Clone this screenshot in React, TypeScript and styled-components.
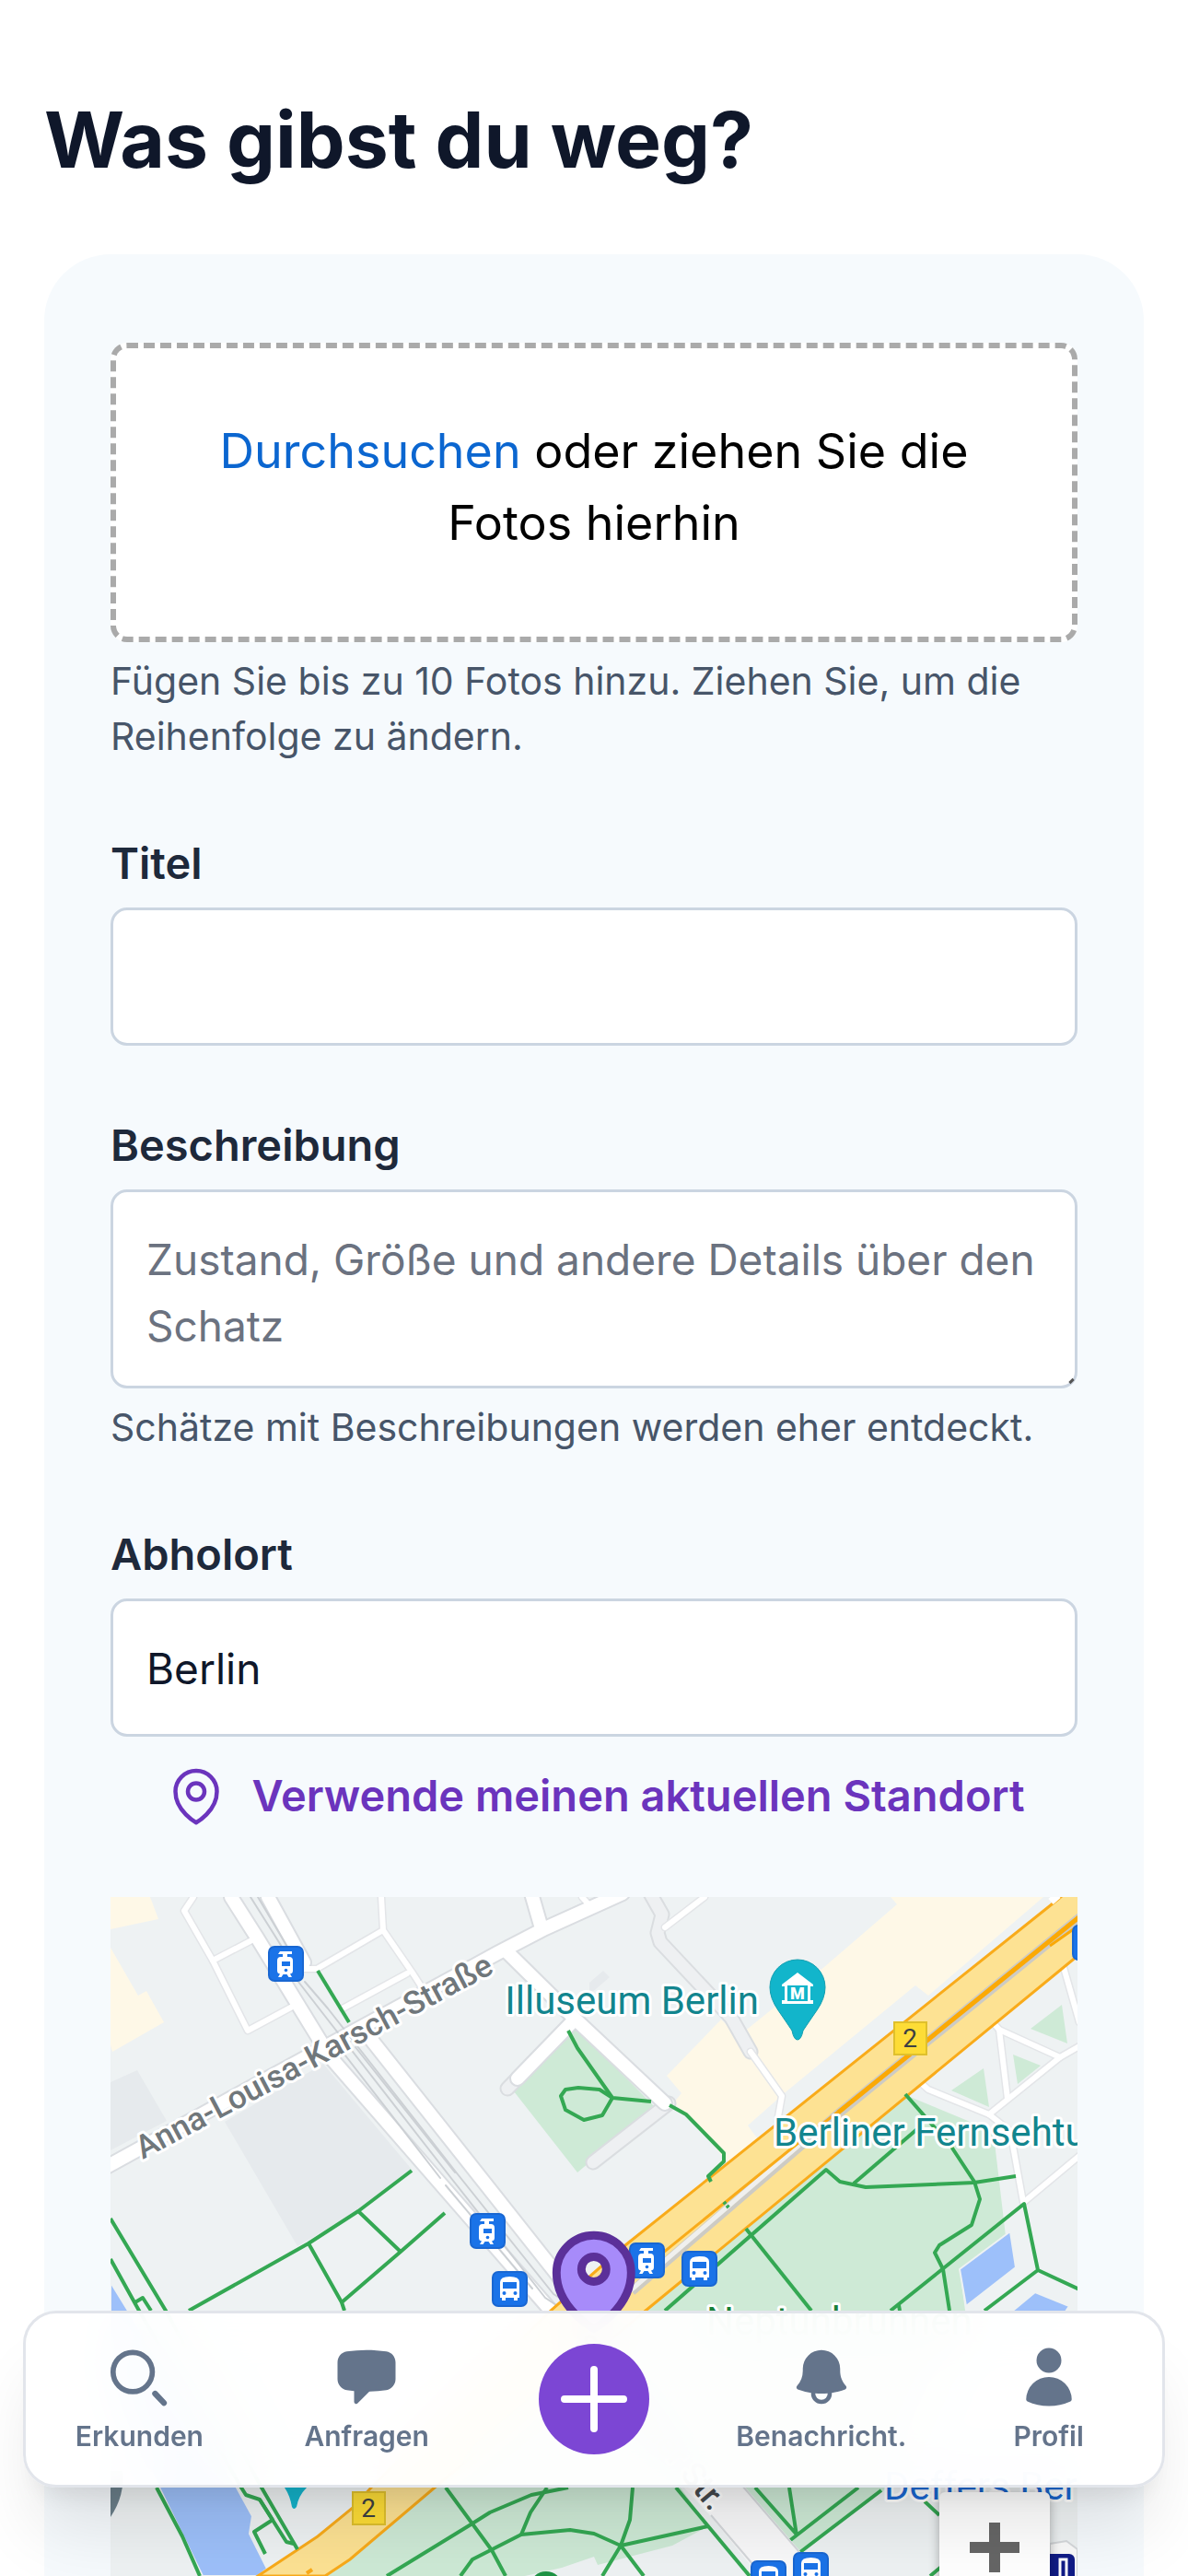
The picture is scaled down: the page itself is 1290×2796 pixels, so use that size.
import React from "react";
import styled, { createGlobalStyle, css } from "styled-components";
import { HiBell, HiChatBubbleLeft, HiOutlineMapPin, HiUser } from "react-icons/hi2";

const GlobalStyle = createGlobalStyle`
  *, *::before, *::after { box-sizing: border-box; }
  body { margin: 0; background: #fff; }
  button, input, textarea { font: inherit; }
`;

const fontStack = `Inter, "Liberation Sans", sans-serif`;

const Screen = styled.div`
  height: 100vh;
  overflow-y: auto;
  scrollbar-width: none;
  padding: 96px 48px 0;
  background: #fff;
  color: #0f172a;
  font-family: ${fontStack};
  font-size: 46px;
  line-height: 72px;
`;

const Title = styled.h1`
  margin: 0 0 68px;
  font-size: 84px;
  line-height: 112px;
  font-weight: 700;
`;

const Card = styled.form`
  display: flex;
  flex-direction: column;
  gap: 72px;
  padding: 96px 72px;
  border-radius: 72px;
  background: #f6fafd;
`;

const Field = styled.div`
  display: flex;
  flex-direction: column;
  gap: 12px;
`;

const Label = styled.label`
  color: #1e293b;
  font-size: 47px;
  font-weight: 600;
`;

const Help = styled.p`
  margin: 0;
  color: #475569;
  font-size: 41px;
  line-height: 60px;
`;

const DropZone = styled.div`
  display: flex;
  align-items: center;
  justify-content: center;
  height: 325px;
  padding: 0 96px 12px;
  border: 6px dashed #aaa;
  border-radius: 18px;
  background: #fff;
  color: #000;
  font-size: 52px;
  line-height: 78px;
  text-align: center;
`;

const Browse = styled.button`
  padding: 0;
  border: 0;
  background: none;
  color: #0b66d0;
  cursor: pointer;
`;

const control = css`
  width: 100%;
  border: 3px solid #cbd5e1;
  border-radius: 18px;
  background: #fff;
  color: #0f172a;
  outline: none;
`;

const TextInput = styled.input`
  ${control}
  height: 150px;
  padding: 2px 36px 0;
`;

const AreaFrame = styled.div`
  position: relative;
  display: flex;
`;

const TextArea = styled.textarea`
  ${control}
  height: 216px;
  padding: 37px 36px 29px;
  resize: none;
  overflow: hidden;
  &::placeholder { color: #6b7280; opacity: 1; }
`;

const Grip = styled.span`
  position: absolute;
  right: 5px;
  bottom: 5px;
  width: 3px;
  height: 6px;
  background: #555;
  transform: rotate(45deg);
`;

const LocateButton = styled.button`
  display: flex;
  align-items: center;
  justify-content: center;
  gap: 24px;
  padding: 0;
  margin: 16px 0 2px;
  border: 0;
  background: none;
  color: #6b34bd;
  font-size: 47px;
  font-weight: 600;
  cursor: pointer;
  svg { width: 72px; height: 72px; }
`;

const MapFrame = styled.div`
  position: relative;
  height: 960px;
  overflow: hidden;
  background: #eef2f3;
`;

const MapDrawing = styled.svg`
  display: block;
  width: 100%;
  height: 100%;
  font-family: Roboto, sans-serif;
`;

const HaloLabels = styled.g`
  stroke: #fff;
  stroke-width: 6px;
  stroke-linejoin: round;
  paint-order: stroke;
`;

const ZoomControls = styled.div`
  position: absolute;
  right: 30px;
  bottom: 74px;
  display: flex;
  flex-direction: column;
  border-radius: 6px;
  background: #fff;
  box-shadow: 0 3px 12px rgba(0, 0, 0, 0.3);
`;

const ZoomButton = styled.button`
  display: grid;
  place-items: center;
  width: 120px;
  height: 120px;
  padding: 0;
  border: 0;
  background: none;
  cursor: pointer;
`;

const NavBar = styled.nav`
  position: fixed;
  left: 25px;
  right: 25px;
  bottom: 96px;
  display: grid;
  grid-template-columns: repeat(5, 1fr);
  align-items: center;
  height: 192px;
  border: 3px solid #e2e5eb;
  border-radius: 36px;
  background: rgba(255, 255, 255, 0.95);
  backdrop-filter: blur(24px);
  box-shadow: 0 60px 75px -15px rgba(0, 0, 0, 0.1), 0 24px 30px -18px rgba(0, 0, 0, 0.1);
  font-family: ${fontStack};
`;

const NavLink = styled.a`
  display: flex;
  flex-direction: column;
  align-items: center;
  gap: 8px;
  color: #64748b;
  font-size: 30px;
  line-height: 40px;
  font-weight: 600;
  text-decoration: none;
  svg { width: 72px; height: 72px; }
`;

const AddButton = styled.button`
  display: grid;
  place-items: center;
  justify-self: center;
  width: 120px;
  height: 120px;
  padding: 0;
  border: 0;
  border-radius: 50%;
  background: #7c46d4;
  cursor: pointer;
`;

const Tile = ({ x, y }: { x: number; y: number }) => (
  <rect x={x + 1} y={y + 1} width="37" height="37" rx="6" fill="#1a73e8" stroke="#1967d2" strokeWidth="2" />
);

const Tram = ({ x, y }: { x: number; y: number }) => (
  <g>
    <Tile x={x} y={y} />
    <g transform={`translate(${x} ${y})`}>
      <path d="M13 6h13v3h-5v3h2q4 0 4 4v11q0 3-3 3.500l2 3.500h-3.500l-2-3h-4l-2 3h-3.500l2-3.500q-3-.5-3-3.500v-11q0-4 4-4h2v-3h-5z" fill="#fff" />
      <path d="M15 17h9v5h-9z" fill="#1a73e8" />
      <circle cx="19.500" cy="26.500" r="1.800" fill="#1a73e8" />
    </g>
  </g>
);

const Bus = ({ x, y }: { x: number; y: number }) => (
  <g>
    <Tile x={x} y={y} />
    <g transform={`translate(${x} ${y})`}>
      <path d="M9 12q0-6 10.500-6t10.500 6v17h-2v3h-4v-3h-9v3h-4v-3h-2z" fill="#fff" />
      <path d="M12 12h15v7h-15z" fill="#1a73e8" />
      <circle cx="13.500" cy="24" r="2" fill="#1a73e8" />
      <circle cx="25.500" cy="24" r="2" fill="#1a73e8" />
    </g>
  </g>
);

const Shield = ({ x, y }: { x: number; y: number }) => (
  <g>
    <rect x={x + 1} y={y + 1} width="35" height="35" fill="#fddc36" stroke="#dfc02c" strokeWidth="2" />
    <text x={x + 18} y={y + 28} fontSize="28" textAnchor="middle" fill="#3c4043">2</text>
  </g>
);

const parks = [
  "M623 2200L558 2270 627 2358 711 2287 640 2215z",
  "M986 2275L1051 2302 1079 2317 1092 2427 1042 2463 1048 2508 960 2703 869 2772 806 2700 739 2700 769 2742 730 2763 649 2784 645 2775 610 2787 570 2796 533 2796 353 2796 380 2778 472 2700 701 2508z",
  "M1119 2202L1153 2176 1159 2218z",
  "M1100 2230L1130 2242 1105 2262z",
  "M1033 2269L1068 2245 1074 2287z",
];

const water = [
  "M120 2477L139 2508 257 2700 274 2731 271 2750 290 2788 280 2796 220 2796 173 2700 120 2590z",
  "M1042 2463L1097 2422 1103 2461 1049 2503z",
  "M1124 2488L1161 2503 1155 2512 1095 2512z",
];

const lanes = [
  "M210 2059L200 2074 231 2128 269 2204 323 2175",
  "M231 2128L279 2103",
  "M414 2059L416 2095 449 2143 458 2157",
  "M330 2137L344 2137 416 2095",
  "M372 2180L442 2142",
  "M722 2092L765 2059",
  "M632 2059L640 2068",
  "M815 2227L849 2275 844 2303",
  "M1154 2132L1172 2195",
  "M1078 2195L1085 2203 1151 2233 1172 2221",
  "M1085 2203L1094 2278",
  "M1151 2233L1074 2295",
  "M999 2260L1008 2268 1074 2295 1097 2313 1111 2390",
  "M1112 2390L1172 2340",
];

const streets = [
  "M251 2059L279 2103 323 2175 358 2232 600 2510",
  "M291 2059L330 2130",
  "M404 2215L606 2470 630 2510",
  "M112 2354L250 2278 540 2120 592 2093 676 2055",
  "M577 2055L588 2093",
  "M552 2120L623 2190 722 2283",
  "M623 2193L562 2256",
];

const rails = [
  "M272 2059L306 2113M324 2151L348 2182 489 2363 592 2494 610 2506",
  "M280 2059L312 2113M331 2151L356 2180 497 2360 601 2490 620 2502",
  "M368 2222L478 2364M386 2222L494 2358M484 2372L578 2484",
];

const trails = [
  "M345 2139L379 2195",
  "M120 2408L180 2508 284 2700 323 2767",
  "M120 2452L151 2508 262 2700 267 2708 282 2713 296 2735 276 2748 288 2772",
  "M145 2500L155 2494 164 2508",
  "M282 2713L311 2759 319 2761",
  "M447 2356L389 2400 335 2435 205 2508",
  "M335 2435L371 2499 374 2508",
  "M389 2400L435 2444M483 2402L435 2444 371 2499",
  "M617 2204L627 2223 665 2277 707 2281",
  "M665 2277L651 2268 628 2266 614 2268 609 2275 614 2290 634 2301 654 2296 665 2277",
  "M727 2285L745 2295 786 2337 786 2346 769 2362 772 2368",
  "M983 2273L1033 2330 1058 2368 1064 2387 1055 2415 1020 2437 1015 2445 1024 2463 1031 2508",
  "M722 2508L897 2355 912 2368 940 2374 1058 2369 1103 2362",
  "M927 2370L997 2310",
  "M810 2419L881 2508",
  "M967 2508L1112 2392 1127 2464 1172 2485M1127 2464L1069 2508M976 2502L977 2508",
  "M170 2700L198 2753 217 2796",
  "M484 2700L534 2768 549 2796",
  "M420 2796L513 2739 532 2727 577 2708 617 2700",
  "M594 2700L576 2727 566 2751",
  "M500 2796L513 2778 566 2751 619 2746 645 2750 674 2763 769 2742",
  "M687 2700L684 2735 674 2763 654 2796M674 2763L699 2796",
  "M734 2700L769 2742 814 2796",
  "M820 2700L866 2752M857 2700L865 2752M932 2700L857 2758M957 2703L869 2770",
  "M1004 2715L1020 2730M1010 2796L1022 2786",
];

const BerlinMap = () => (
  <MapDrawing viewBox="120 2059 1050 960" preserveAspectRatio="xMidYMin slice" role="img" aria-label="Karte von Berlin">
    <path fill="#fef8e7" d="M120 2059H163L172 2083 120 2094zM120 2114L150 2166 159 2161 178 2195 122 2227 120 2220zM967 2059L974 2067 895 2135 802 2210 783 2192 724 2253 740 2272 731 2283 747 2295 786 2342 794 2348 823 2322 812 2307 854 2270 994 2155 1008 2166 1133 2059z" />
    <path fill="#e6eaed" d="M120 2260L149 2247 181 2302 120 2334zM244 2303L351 2240 449 2357 389 2400 323 2438zM640 2152L655 2139 662 2146 640 2165z" />
    {parks.map((d) => <path key={d} d={d} fill="#ceead6" />)}
    {water.map((d) => <path key={d} d={d} fill="#9dc0fa" stroke="#eef2f3" strokeWidth="2" />)}
    <g fill="none" strokeLinejoin="round" strokeLinecap="round">
      <path d="M706 2055L719 2078 714 2098 717 2108 794 2190 815 2227M726 2283L644 2347" stroke="#dadde0" strokeWidth="17" />
      <path d="M706 2055L719 2078 714 2098 717 2108 794 2190 815 2227M726 2283L644 2347" stroke="#eef0f2" strokeWidth="13" />
      <path d="M623 2193L551 2267" stroke="#dadde0" strokeWidth="17" />
      <path d="M623 2193L551 2267" stroke="#eef0f2" strokeWidth="13" />
      <g stroke="#e3e5e8" strokeWidth="9">{lanes.map((d) => <path key={d} d={d} />)}</g>
      <g stroke="#dadde1" strokeWidth="18">{streets.map((d) => <path key={d} d={d} />)}</g>
      <g stroke="#fff" strokeWidth="6">{lanes.map((d) => <path key={d} d={d} />)}</g>
      <g stroke="#fff" strokeWidth="14">{streets.map((d) => <path key={d} d={d} />)}</g>
      <g stroke="#ccd0d4" strokeWidth="2">{rails.map((d) => <path key={d} d={d} />)}</g>
    </g>
    <path d="M1147 2063L1160 2052H1190V2107L1170 2123 701 2508 472 2700 380 2778 353 2796 280 2796 345 2753 383 2722 403 2700 599 2507 679 2437z" fill="#fde293" stroke="#f9ab1a" strokeWidth="3" />
    <path d="M1141 2064L1149 2057" stroke="#fff" strokeWidth="8" />
    <g fill="none">
      <path d="M1174 2080L908 2296 686 2487" stroke="#cdcbc4" strokeWidth="10" />
      <path d="M868 2328L680 2490" stroke="#f0f0ee" strokeWidth="5" />
      <path d="M1174 2079L910 2293" stroke="#fba905" strokeWidth="5" />
      <path d="M1174 2088L1140 2112" stroke="#fba905" strokeWidth="3" />
      <path d="M910 2292L868 2325 640 2510" stroke="#f9ab1a" strokeWidth="3" />
      <path d="M333 2793L339 2789" stroke="#f9ab1a" strokeWidth="4" />
    </g>
    <g fill="none" stroke="#34a853" strokeWidth="4" strokeLinejoin="round">
      {trails.map((d) => <path key={d} d={d} />)}
      <path d="M786 2390L792 2397" strokeDasharray="3 2" />
    </g>
    <path d="M739 2696L806 2696 868 2768 880 2800H828L769 2728z" fill="#f9f9fa" />
    <path d="M806 2698L868 2770M772 2730L818 2784" stroke="#d5d8db" strokeWidth="2" />
    <path d="M1140 2761L1158 2758 1170 2767V2800H1140z" fill="#fafafa" stroke="#d5d8db" strokeWidth="2" />
    <path d="M120 2682H133Q136 2708 120 2732z" fill="#6b7f8a" />
    <path d="M309 2700H333Q324 2709 322 2721Q319 2725 317 2721Q315 2709 309 2700z" fill="#14b4cc" />
    <circle cx="593" cy="2809" r="18" fill="#1e9444" />
    <Tram x={291} y={2112} />
    <Tram x={510} y={2402} />
    <Tram x={683} y={2434} />
    <Bus x={534} y={2465} />
    <Bus x={740} y={2443} />
    <Bus x={1164} y={2089} />
    <Bus x={815} y={2779} />
    <Bus x={861} y={2770} />
    <rect x="1132" y="2772" width="35" height="38" rx="6" fill="#111c87" />
    <path d="M1151 2778h7v24h-7z" fill="none" stroke="#fff" strokeWidth="3" />
    <Shield x={970} y={2194} />
    <Shield x={382} y={2704} />
    <path d="M866 2127a30 30 0 0 1 30 30q0 12-9 25t-15 22q-2 10-6 10t-6-10q-6-9-15-22t-9-25a30 30 0 0 1 30-30z" fill="#12b5cb" stroke="#129eaf" strokeWidth="1" />
    <path d="M849 2154L866 2141 883 2154V2156H880V2171H883V2175H849V2171H852V2156H849z" fill="#fff" />
    <path d="M855 2155H877V2172H855z" fill="#12b5cb" />
    <text x="866" y="2170" fontSize="18" fontWeight="900" textAnchor="middle" fill="#fff">M</text>
    <HaloLabels>
      <text x="824" y="2186" fontSize="42" textAnchor="end" fill="#12858e">Illuseum Berlin</text>
      <text x="840" y="2329" fontSize="42" fill="#12858e">Berliner Fernsehturm</text>
      <text x="767" y="2534" fontSize="42" fill="#188038">Neptunbrunnen</text>
      <text x="960" y="2713" fontSize="42" fill="#1a67d2">Deffers Berlin</text>
      <text transform="translate(155 2344) rotate(-28)" fontSize="35" fontWeight="500" fill="#70777b">Anna-Louisa-Karsch-Straße</text>
      <text transform="translate(772 2727) rotate(50)" fontSize="36" fontWeight="500" textAnchor="end" fill="#45494d">Spandauer Str.</text>
    </HaloLabels>
    <g transform="translate(580 2410) scale(5.400)">
      <path d="M19.500 10.500c0 7.142-7.500 11.250-7.500 11.250S4.500 17.642 4.500 10.500a7.500 7.500 0 1 1 15 0zM14.500 9.800a2.500 2.500 0 1 0-5 0a2.500 2.500 0 1 0 5 0z" fill="#a78bfa" fillRule="evenodd" stroke="#5b3099" strokeWidth="1.650" />
    </g>
  </MapDrawing>
);

const SearchIcon = () => (
  <svg viewBox="0 0 24 24" fill="none" stroke="currentColor" strokeLinecap="round" aria-hidden="true">
    <circle cx="9.700" cy="10.200" r="7.100" strokeWidth="1.900" />
    <path d="M17.800 18L21 21.400" strokeWidth="2.100" />
  </svg>
);

export default function App() {
  return (
    <>
      <GlobalStyle />
      <Screen>
        <Title>Was gibst du weg?</Title>
        <Card onSubmit={(event) => event.preventDefault()}>
          <Field>
            <DropZone>
              <div>
                <Browse type="button">Durchsuchen</Browse> oder ziehen Sie die Fotos hierhin
              </div>
            </DropZone>
            <Help>Fügen Sie bis zu 10 Fotos hinzu. Ziehen Sie, um die Reihenfolge zu ändern.</Help>
          </Field>
          <Field>
            <Label htmlFor="title">Titel</Label>
            <TextInput id="title" type="text" />
          </Field>
          <Field>
            <Label htmlFor="description">Beschreibung</Label>
            <AreaFrame>
              <TextArea id="description" placeholder="Zustand, Größe und andere Details über den Schatz" />
              <Grip />
            </AreaFrame>
            <Help>Schätze mit Beschreibungen werden eher entdeckt.</Help>
          </Field>
          <Field>
            <Label htmlFor="place">Abholort</Label>
            <TextInput id="place" type="text" defaultValue="Berlin" />
            <LocateButton type="button">
              <HiOutlineMapPin aria-hidden="true" />
              Verwende meinen aktuellen Standort
            </LocateButton>
          </Field>
          <MapFrame>
            <BerlinMap />
            <ZoomControls>
              <ZoomButton type="button" aria-label="Vergrößern">
                <svg width="54" height="54" viewBox="0 0 54 54"><path d="M21 0h12v21h21v12H33v21H21V33H0V21h21z" fill="#666" /></svg>
              </ZoomButton>
              <ZoomButton type="button" aria-label="Verkleinern">
                <svg width="54" height="54" viewBox="0 0 54 54"><path d="M0 21h54v12H0z" fill="#666" /></svg>
              </ZoomButton>
            </ZoomControls>
          </MapFrame>
        </Card>
      </Screen>
      <NavBar>
        <NavLink href="#erkunden"><SearchIcon />Erkunden</NavLink>
        <NavLink href="#anfragen"><HiChatBubbleLeft aria-hidden="true" />Anfragen</NavLink>
        <AddButton type="button" aria-label="Hinzufügen">
          <svg width="72" height="72" viewBox="0 0 72 72" stroke="#fff" strokeWidth="8" strokeLinecap="round"><path d="M36 4v64M4 36h64" /></svg>
        </AddButton>
        <NavLink href="#benachrichtigungen"><HiBell aria-hidden="true" />Benachricht.</NavLink>
        <NavLink href="#profil"><HiUser aria-hidden="true" />Profil</NavLink>
      </NavBar>
    </>
  );
}
